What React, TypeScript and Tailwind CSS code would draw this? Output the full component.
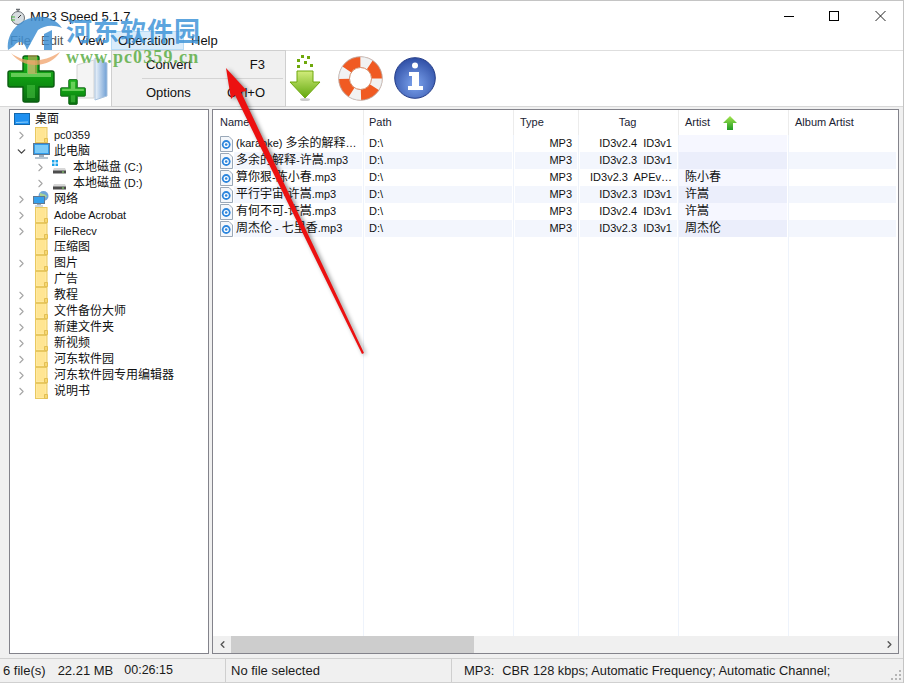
import React from 'react';
import { ChevronLeft, ChevronRight, ChevronDown } from 'lucide-react';

const FONT = "font-['Liberation_Sans','Noto_Sans_CJK_SC',sans-serif]";

// latin runs sit a size below the CJK runs, like the Tahoma + YaHei mix in the app
const Mixed = ({ text }: { text: string }) => (
  <>
    {text.split(/([\u4e00-\u9fff]+)/).map((part, i) =>
      i % 2 === 1 ? (
        <span key={i}>{part}</span>
      ) : (
        <span key={i} className="text-[11px]">
          {part}
        </span>
      ),
    )}
  </>
);

const Folder = () => (
  <svg width="13" height="16" viewBox="0 0 13 16" className="shrink-0">
    <rect x="0.5" y="0.5" width="11.5" height="15" fill="#ffe9a0" stroke="#e8c860" />
    <rect x="2" y="1" width="8" height="13" fill="#ffe592" />
    <path d="M9.5 15.5v-4h3v4z" fill="#f6d873" stroke="#e2bf55" />
  </svg>
);

const Monitor = () => (
  <svg width="17" height="16" viewBox="0 0 17 16" className="shrink-0">
    <rect x="0.5" y="0.5" width="16" height="11" fill="#2f9bea" stroke="#62788f" />
    <rect x="2" y="2" width="13" height="8" fill="#7ccbf8" />
    <path d="M6 12h5v2H6z" fill="#9db0c0" />
    <path d="M2 15h13" stroke="#9db0c0" strokeWidth="1.5" />
  </svg>
);

const DesktopIcon = () => (
  <svg width="16" height="13" viewBox="0 0 16 13" className="shrink-0">
    <rect x="0.5" y="0.5" width="15" height="11" fill="#1e90f0" stroke="#1268ad" />
    <path d="M2 9.5L14 9" stroke="#8fd0fa" />
  </svg>
);

const Drive = ({ win }: { win?: boolean }) => (
  <svg width="15" height="15" viewBox="0 0 15 15" className="shrink-0">
    {win && (
      <g fill="#19a2ea">
        <rect x="0" y="0" width="2.5" height="2.5" />
        <rect x="3.5" y="0" width="2.5" height="2.5" />
        <rect x="0" y="3.5" width="2.5" height="2.5" />
        <rect x="3.5" y="3.5" width="2.5" height="2.5" />
      </g>
    )}
    <path d="M2 8h11l1 2v3H1v-3z" fill="#d7d7d7" />
    <rect x="1" y="10.5" width="13" height="3" fill="#4c4c4c" />
    <rect x="10" y="11.5" width="2" height="1" fill="#8ee66e" />
  </svg>
);

const NetworkIcon = () => (
  <svg width="17" height="16" viewBox="0 0 17 16" className="shrink-0">
    <circle cx="10.5" cy="5" r="5" fill="#6fa6d8" />
    <path d="M7 2c3 1 6 1 7 4-3 1-5 0-7-1z" fill="#a9d394" />
    <rect x="0.5" y="5.5" width="11" height="7" fill="#35a0ec" stroke="#62788f" />
    <path d="M4 13.5h4M2 15h8" stroke="#9db0c0" />
  </svg>
);

const TREE: { label: string; kind?: string; arrow?: string; indent?: boolean }[] = [
  { label: 'pc0359', arrow: 'right' },
  { label: '此电脑', kind: 'pc', arrow: 'down' },
  { label: '本地磁盘 (C:)', kind: 'c', arrow: 'right', indent: true },
  { label: '本地磁盘 (D:)', kind: 'd', arrow: 'right', indent: true },
  { label: '网络', kind: 'net', arrow: 'right' },
  { label: 'Adobe Acrobat', arrow: 'right' },
  { label: 'FileRecv', arrow: 'right' },
  { label: '压缩图' },
  { label: '图片', arrow: 'right' },
  { label: '广告' },
  { label: '教程', arrow: 'right' },
  { label: '文件备份大师', arrow: 'right' },
  { label: '新建文件夹', arrow: 'right' },
  { label: '新视频', arrow: 'right' },
  { label: '河东软件园', arrow: 'right' },
  { label: '河东软件园专用编辑器', arrow: 'right' },
  { label: '说明书', arrow: 'right' },
];

const FILES = [
  { name: '(karaoke) 多余的解释…', tag: 'ID3v2.4  ID3v1', artist: '' },
  { name: '多余的解释-许嵩.mp3', tag: 'ID3v2.3  ID3v1', artist: '' },
  { name: '算你狠-陈小春.mp3', tag: 'ID3v2.3  APEv…', artist: '陈小春' },
  { name: '平行宇宙-许嵩.mp3', tag: 'ID3v2.3  ID3v1', artist: '许嵩' },
  { name: '有何不可-许嵩.mp3', tag: 'ID3v2.4  ID3v1', artist: '许嵩' },
  { name: '周杰伦 - 七里香.mp3', tag: 'ID3v2.3  ID3v1', artist: '周杰伦' },
];

const BigPlus = ({ size, id }: { size: number; id: string }) => (
  <svg width={size} height={size} viewBox="0 0 48 48" className="shrink-0">
    <defs>
      <linearGradient id={id} x1="0" y1="0" x2="0" y2="1">
        <stop offset="0" stopColor="#1fb51f" />
        <stop offset="0.5" stopColor="#0f9a12" />
        <stop offset="1" stopColor="#096d10" />
      </linearGradient>
    </defs>
    <path
      d="M16 3q0-2 2-2h12q2 0 2 2v13h13q2 0 2 2v12q0 2-2 2H32v13q0 2-2 2H18q-2 0-2-2V32H3q-2 0-2-2V18q0-2 2-2h13z"
      fill={`url(#${id})`}
      stroke="#0a5c10"
      strokeWidth="1.4"
    />
    <path d="M20 5h8v13h16v4H4v-4h16z" fill="#a8f08c" opacity="0.55" />
    <path d="M20 30h8v13h-8z" fill="#52c94a" opacity="0.5" />
  </svg>
);

const FolderAdd = () => (
  <div className="relative w-[50px] h-[50px] shrink-0">
    <svg width="32" height="44" viewBox="0 0 32 44" className="absolute left-[16px] top-0">
      <defs>
        <linearGradient id="blueDoor" x1="0" y1="0" x2="1" y2="0">
          <stop offset="0" stopColor="#eef4fb" />
          <stop offset="1" stopColor="#6f9fd4" />
        </linearGradient>
      </defs>
      <path d="M1 8L18 3v38H1z" fill="#f4f4f4" stroke="#d4d4d4" />
      <path d="M19 1l12 5v33l-12 4z" fill="url(#blueDoor)" stroke="#a8c2de" />
    </svg>
    <div className="absolute left-0 top-[22px]">
      <BigPlus size={26} id="plusSmall" />
    </div>
  </div>
);

const ArrowTool = () => (
  <svg width="32" height="46" viewBox="0 0 32 46" className="shrink-0">
    <defs>
      <linearGradient id="dl" x1="0" y1="0" x2="0" y2="1">
        <stop offset="0" stopColor="#d2ec7c" />
        <stop offset="1" stopColor="#62a80e" />
      </linearGradient>
    </defs>
    <g fill="#6fa80c">
      <rect x="12" y="0" width="3" height="3" />
      <rect x="18" y="1" width="3" height="3" />
      <rect x="8" y="4" width="3" height="3" />
      <rect x="15" y="6" width="3" height="3" />
      <rect x="8" y="10" width="3" height="3" />
      <rect x="21" y="9" width="3" height="3" />
    </g>
    <path d="M8 16h16v11h7L16 43 1 27h7z" fill="url(#dl)" stroke="#6fa80c" />
    <ellipse cx="16" cy="44.5" rx="5" ry="1.5" fill="#999" opacity="0.5" />
  </svg>
);

const Buoy = () => (
  <svg width="45" height="45" viewBox="0 0 45 45" className="shrink-0">
    <circle cx="22.5" cy="22.5" r="16.5" fill="none" stroke="#f05a22" strokeWidth="11" />
    <circle
      cx="22.5"
      cy="22.5"
      r="16.5"
      fill="none"
      stroke="#f2f2f2"
      strokeWidth="11"
      strokeDasharray="10 15.92"
      strokeDashoffset="5"
      transform="rotate(15 22.5 22.5)"
    />
    <circle cx="22.5" cy="22.5" r="21.8" fill="none" stroke="#b8b8b8" strokeWidth="0.8" />
    <circle cx="22.5" cy="22.5" r="11" fill="#fff" stroke="#c9774f" strokeWidth="0.8" />
  </svg>
);

const InfoIcon = () => (
  <svg width="42" height="42" viewBox="0 0 42 42" className="shrink-0">
    <defs>
      <radialGradient id="infoBg" cx="0.5" cy="0.65" r="0.7">
        <stop offset="0" stopColor="#7da4ee" />
        <stop offset="1" stopColor="#28479f" />
      </radialGradient>
    </defs>
    <circle cx="21" cy="21" r="20.3" fill="url(#infoBg)" stroke="#233c88" />
    <circle cx="21" cy="8.5" r="3" fill="#fff" />
    <path d="M15 15h10v14h4v4H14v-4h4V19h-3z" fill="#fff" />
  </svg>
);

const AudioFile = () => (
  <svg width="13" height="16" viewBox="0 0 13 16" className="shrink-0">
    <path d="M0.5 0.5h8.5l3.5 3.5v11.5H0.5z" fill="#f4f7fb" stroke="#9aa8b8" />
    <circle cx="6.2" cy="8.5" r="4.4" fill="#2d86dd" />
    <circle cx="6.2" cy="8.5" r="2.6" fill="#fff" />
    <circle cx="6.2" cy="8.5" r="1.3" fill="#2d86dd" />
  </svg>
);

const App = () => {
  return (
    <div className={`relative w-[904px] h-[683px] overflow-hidden bg-[#f0f0f0] text-[#111] text-[12px] ${FONT}`}>
      <div className="flex flex-col h-full border-t border-r border-[#c4c4c4]">
        {/* Title bar */}
        <div className="h-[31px] bg-white flex items-center pl-[10px] shrink-0">
          <svg width="16" height="18" viewBox="0 0 16 18" className="shrink-0">
            <circle cx="8" cy="10" r="6.5" fill="#d8dde0" stroke="#6b7075" />
            <path d="M6 1.5h4M8 2v2" stroke="#6b7075" strokeWidth="1.4" />
            <path d="M8 10l3-3" stroke="#333" />
            <path d="M1 9h4M1 12h4" stroke="#46b33c" />
          </svg>
          <span className="ml-[4px] text-[13px]">MP3 Speed 5.1.7</span>
          <div className="ml-auto flex items-center text-black">
            <svg width="46" height="31" viewBox="0 0 46 31">
              <path d="M19 15.5h10" stroke="#000" />
            </svg>
            <svg width="46" height="31" viewBox="0 0 46 31">
              <rect x="18.5" y="10.5" width="9" height="9" fill="none" stroke="#000" />
            </svg>
            <svg width="46" height="31" viewBox="0 0 46 31">
              <path d="M18.5 10l10 10M28.5 10l-10 10" stroke="#222" />
            </svg>
          </div>
        </div>

        {/* Menu bar */}
        <div className="h-[18px] bg-white flex items-stretch pl-[10px] text-[13px] shrink-0 border-b border-[#dedede] box-content">
          <span className="w-[31px] leading-[18px] text-[#555]">File</span>
          <span className="w-[36px] leading-[18px] text-[#555]">Edit</span>
          <span className="w-[34px] leading-[18px]">View</span>
          <span className="w-[73px] leading-[18px] bg-[#d9ecfb] border border-[#b6dcf7] pl-[6px] -mt-[1px]">Operation</span>
          <span className="ml-[7px] leading-[18px]">Help</span>
        </div>

        {/* Toolbar */}
        <div className="h-[55px] flex items-center pl-[7px] bg-white shrink-0 border-b border-[#d8d8d8] box-content">
          <div className="mt-[1px]">
            <BigPlus size={48} id="plusBig" />
          </div>
          <div className="ml-[5px] mt-[7px]">
            <FolderAdd />
          </div>
          <div className="ml-[179px] -mt-[1px]">
            <ArrowTool />
          </div>
          <div className="ml-[17px] -mt-[1px]">
            <Buoy />
          </div>
          <div className="ml-[11px] -mt-[1px]">
            <InfoIcon />
          </div>
        </div>

        {/* Panes */}
        <div className="flex-1 min-h-0 flex gap-[3px] pl-[9px] pr-[4px] pt-[2px] pb-[4px]">
          <div className="w-[200px] shrink-0 bg-white border border-[#83838b] pt-[1px] overflow-hidden">
            <div className="h-[16px] flex items-center pl-[4px] gap-[5px]">
              <DesktopIcon />
              <span>桌面</span>
            </div>
            {TREE.map((t) => (
              <div key={t.label} className={`h-[16px] flex items-center ${t.indent ? 'pl-[23px]' : 'pl-[4px]'}`}>
                <span className="w-[14px] flex justify-center shrink-0">
                  {t.arrow === 'right' && <ChevronRight size={13} strokeWidth={2} className="text-[#a6a6a6]" />}
                  {t.arrow === 'down' && <ChevronDown size={13} strokeWidth={2.4} className="text-[#444]" />}
                </span>
                <span className={`flex w-[26px] shrink-0 ${t.kind ? 'pl-[5px]' : 'pl-[7px]'}`}>
                  {t.kind === 'pc' && <Monitor />}
                  {t.kind === 'c' && <Drive win />}
                  {t.kind === 'd' && <Drive />}
                  {t.kind === 'net' && <NetworkIcon />}
                  {!t.kind && <Folder />}
                </span>
                <span className="whitespace-nowrap">
                  <Mixed text={t.label} />
                </span>
              </div>
            ))}
          </div>

          <div className="flex-1 min-w-0 bg-white border border-[#83838b] flex flex-col">
            <div className="flex-1 min-h-0 relative overflow-hidden">
              {/* Header */}
              <div className="flex h-[25px] items-center text-[11px] text-[#1a2333]">
                <div className="w-[151px] h-full pl-[7px] flex items-center border-r border-[#ececec]">Name</div>
                <div className="w-[150px] h-full pl-[5px] flex items-center border-r border-[#ececec]">Path</div>
                <div className="w-[65px] h-full pl-[6px] flex items-center border-r border-[#ececec]">Type</div>
                <div className="w-[100px] h-full flex items-center justify-center pr-[2px] border-r border-[#ececec]">Tag</div>
                <div className="w-[110px] h-full pl-[6px] flex items-center gap-[12px] border-r border-[#ececec]">
                  Artist
                  <svg width="16" height="16" viewBox="0 0 16 16">
                    <defs>
                      <linearGradient id="upG" x1="0" y1="0" x2="0" y2="1">
                        <stop offset="0" stopColor="#a4e64e" />
                        <stop offset="1" stopColor="#1f9a24" />
                      </linearGradient>
                    </defs>
                    <path d="M8 1l7 7h-4v7H5V8H1z" fill="url(#upG)" />
                  </svg>
                </div>
                <div className="flex-1 h-full pl-[6px] flex items-center">Album Artist</div>
              </div>
              {/* Rows */}
              {FILES.map((f, i) => {
                const alt = i % 2 === 1;
                const band = alt ? 'bg-[#f3f6fd]' : 'bg-white';
                return (
                  <div key={f.name} className="flex h-[17px] items-center">
                    <div className="w-[151px] h-full flex items-center pl-[7px] gap-[1px] pr-[1px] border-r border-[#eef3fb]">
                      <AudioFile />
                      <span className={`flex-1 h-full pl-[2px] leading-[17px] whitespace-nowrap overflow-hidden ${band}`}>
                        <Mixed text={f.name} />
                      </span>
                    </div>
                    <div className="w-[150px] h-full pl-[1px] pr-[1px] border-r border-[#eef3fb]">
                      <div className={`h-full pl-[4px] leading-[17px] text-[11px] ${band}`}>D:\</div>
                    </div>
                    <div className="w-[65px] h-full pl-[1px] pr-[1px] border-r border-[#eef3fb]">
                      <div className={`h-full pr-[5px] text-right leading-[17px] text-[11px] ${band}`}>MP3</div>
                    </div>
                    <div className="w-[100px] h-full pl-[1px] pr-[1px] border-r border-[#eef3fb]">
                      <div className={`h-full pr-[5px] text-right leading-[17px] text-[11px] whitespace-pre ${band}`}>{f.tag}</div>
                    </div>
                    <div className="w-[110px] h-full pr-[1px] border-r border-[#eef3fb]">
                      <div className={`h-full pl-[6px] leading-[17px] ${alt ? 'bg-[#ebeefb]' : 'bg-[#f6f7ff]'}`}>{f.artist}</div>
                    </div>
                    <div className={`flex-1 h-full mr-[2px] ${band}`} />
                  </div>
                );
              })}
              {/* Column guide lines under the rows */}
              <div className="absolute top-[127px] bottom-0 left-0 right-0 flex pointer-events-none">
                <div className="w-[151px] border-r border-[#eef3fb]" />
                <div className="w-[150px] border-r border-[#eef3fb]" />
                <div className="w-[65px] border-r border-[#eef3fb]" />
                <div className="w-[100px] border-r border-[#eef3fb]" />
                <div className="w-[110px] border-r border-[#eef3fb]" />
              </div>
            </div>
            {/* Horizontal scrollbar */}
            <div className="h-[17px] bg-[#f0f0f0] flex items-center shrink-0">
              <span className="w-[18px] flex justify-center shrink-0">
                <ChevronLeft size={11} strokeWidth={3} className="text-[#555]" />
              </span>
              <div className="w-[243px] h-full bg-[#cdcdcd] shrink-0" />
              <span className="ml-auto w-[17px] flex justify-center shrink-0">
                <ChevronRight size={11} strokeWidth={3} className="text-[#555]" />
              </span>
            </div>
          </div>
        </div>

        {/* Status bar */}
        <div className="h-[25px] shrink-0 flex items-center border-t border-b border-[#d0d0d0] text-[13px] text-[#1a1a1a] relative">
          <div className="w-[226px] h-full pl-[3px] flex items-center gap-[12px] whitespace-nowrap border-r border-[#cfcfcf]">
            <span>6 file(s)</span>
            <span>22.21 MB</span>
            <span className="-ml-[1px] text-[12.5px]">00:26:15</span>
          </div>
          <div className="w-[226px] h-full pl-[5px] flex items-center border-r border-[#cfcfcf]">No file selected</div>
          <div className="flex-1 pl-[12px] flex gap-[8px] whitespace-nowrap">
            <span>MP3:</span>
            <span className="text-[12.8px]">CBR 128 kbps; Automatic Frequency; Automatic Channel;</span>
          </div>
          <svg width="11" height="11" viewBox="0 0 11 11" className="absolute right-[1px] bottom-[1px]">
            <g fill="#b5b5b5">
              <rect x="8" y="0" width="2" height="2" />
              <rect x="4" y="4" width="2" height="2" />
              <rect x="8" y="4" width="2" height="2" />
              <rect x="0" y="8" width="2" height="2" />
              <rect x="4" y="8" width="2" height="2" />
              <rect x="8" y="8" width="2" height="2" />
            </g>
          </svg>
        </div>
      </div>

      {/* Operation menu popup */}
      <div className="absolute left-[111px] top-[50px] w-[175px] h-[57px] bg-[#f0f0f0] border border-[#cfcfcf] text-[13px]">
        <div className="h-[27px] flex items-center justify-between pl-[34px] pr-[20px]">
          <span>Convert</span>
          <span>F3</span>
        </div>
        <div className="ml-[30px] mr-[2px] border-t border-[#d4d4d4]" />
        <div className="h-[28px] flex items-center justify-between pl-[34px] pr-[20px]">
          <span>Options</span>
          <span>Ctrl+O</span>
        </div>
      </div>

      {/* Watermark */}
      <svg width="70" height="70" viewBox="0 0 70 70" className="absolute left-0 top-[10px] pointer-events-none">
        <path d="M8 40C6 22 20 8 38 7c10-1 18 3 24 11-10-4-18-2-24 2L27 40c-3-10-9-10-13-4z" fill="#3f8fd2" opacity="0.85" />
        <path d="M44 24l8-4v20h-8z" fill="#3f8fd2" opacity="0.85" />
        <path d="M11 43c11 9 31 11 49-1-8 14-34 20-49 1z" fill="#f0a26a" opacity="0.75" />
        <path d="M28 45h9v19h-9z" fill="#f0a26a" opacity="0.5" />
      </svg>
      <div className="absolute left-[66px] top-[13px] text-[26px] leading-[34px] font-bold text-[#3f95d8]/85 font-['Noto_Sans_CJK_SC',sans-serif] pointer-events-none tracking-[1px]">
        河东软件园
      </div>
      <div className="absolute left-[66px] top-[47px] text-[18px] leading-[20px] font-bold text-[#5cad45]/85 font-['Liberation_Serif',serif] pointer-events-none tracking-[1.1px]">
        www.pc0359.cn
      </div>

      {/* Red annotation arrow */}
      <svg
        width="904"
        height="683"
        viewBox="0 0 904 683"
        className="absolute inset-0 pointer-events-none drop-shadow-[2px_1px_2px_rgba(0,0,0,0.45)]"
      >
        <path d="M226 68L247 91l-6 1L364 353l-2 1L235 95l-4 4z" fill="#ec1111" />
      </svg>
    </div>
  );
};

export default App;
